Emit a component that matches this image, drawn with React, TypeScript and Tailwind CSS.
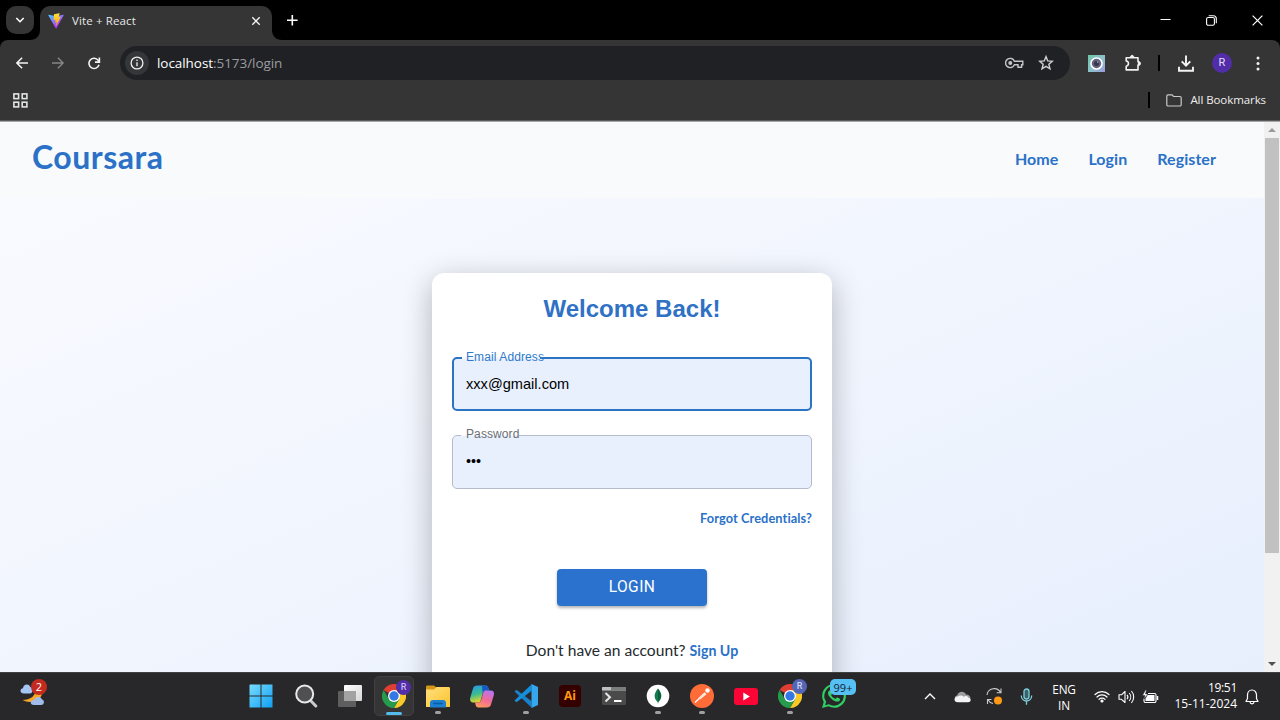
import React from "react";

type P = { children?: React.ReactNode };

const SYS = "font-['Open_Sans','Noto_Sans',sans-serif]";

/* ---------- Browser chrome ---------- */

function TabStrip() {
  return (
    <div className="flex h-10 items-start bg-black pl-1.5 pr-0">
      <div className="mt-1.5 flex h-7 w-7 items-center justify-center rounded-[10px] bg-[#353535]">
        <svg width="10" height="8" viewBox="0 0 10 8" fill="none" stroke="#fff" strokeWidth="1.6">
          <path d="M1.3 2 5 5.7 8.7 2" />
        </svg>
      </div>
      <div className="relative ml-1.5 mt-1.5 flex h-[34px] w-[232px] items-center rounded-t-[10px] bg-[#353535] pb-[5px] pl-2 pr-[11px]">
        <svg className="absolute -left-2.5 bottom-0" width="10" height="10" viewBox="0 0 10 10">
          <path d="M10 0v10H0C6 10 10 6 10 0Z" fill="#353535" />
        </svg>
        <svg className="absolute -right-2.5 bottom-0" width="10" height="10" viewBox="0 0 10 10">
          <path d="M0 0v10h10C4 10 0 6 0 0Z" fill="#353535" />
        </svg>
        <ViteLogo />
        <span className={`${SYS} ml-2 mt-px text-[11.5px] leading-4 tracking-[0.12px] text-[#e8e8e8]`}>Vite + React</span>
        <svg className="ml-auto" width="10" height="10" viewBox="0 0 10 10" stroke="#f2f2f2" strokeWidth="1.4">
          <path d="M1.3 1.3 8.7 8.7M8.7 1.3 1.3 8.7" />
        </svg>
      </div>
      <svg className="ml-[15px] mt-[15px]" width="11" height="11" viewBox="0 0 11 11" stroke="#fff" strokeWidth="1.6">
        <path d="M5.300 0v10.600M0 5.300h10.600" />
      </svg>
      <div className="ml-auto flex h-10 items-center text-white">
        <div className="flex w-[46px] justify-center">
          <svg width="11" height="10" viewBox="0 0 11 10" stroke="#fff" strokeWidth="1">
            <path d="M.5 4.5h10" />
          </svg>
        </div>
        <div className="flex w-[46px] justify-center">
          <svg width="11" height="11" viewBox="0 0 11 11" fill="none" stroke="#fff" strokeWidth="1.1">
            <rect x=".6" y="2.5" width="7.8" height="7.8" rx="1.6" />
            <path d="M2.7.7h4.6a3 3 0 0 1 3 3v4.5" />
          </svg>
        </div>
        <div className="flex w-[46px] justify-center">
          <svg width="11" height="11" viewBox="0 0 11 11" stroke="#fff" strokeWidth="1.2">
            <path d="m.6.6 9.8 9.8M10.4.6.6 10.4" />
          </svg>
        </div>
      </div>
    </div>
  );
}

function ViteLogo() {
  return (
    <svg width="16" height="16" viewBox="0 0 410 404">
      <defs>
        <linearGradient id="vp" x1="6" y1="33" x2="235" y2="344" gradientUnits="userSpaceOnUse">
          <stop stopColor="#41d1ff" />
          <stop offset="1" stopColor="#bd34fe" />
        </linearGradient>
        <linearGradient id="vy" x1="194" y1="9" x2="236" y2="293" gradientUnits="userSpaceOnUse">
          <stop stopColor="#ffea83" />
          <stop offset=".08" stopColor="#ffdd35" />
          <stop offset="1" stopColor="#ffa800" />
        </linearGradient>
      </defs>
      <path d="m399.641 59.525-183.998 329.02c-3.799 6.793-13.559 6.833-17.415.073L10.582 59.556C6.38 52.19 12.68 43.266 21.028 44.76l184.195 32.923c1.175.21 2.378.208 3.553-.006l180.343-32.87c8.32-1.517 14.649 7.337 10.522 14.719Z" fill="url(#vp)" />
      <path d="M292.965 1.574 156.801 28.255a5 5 0 0 0-4.03 4.611l-8.376 141.464c-.197 3.332 2.863 5.918 6.115 5.168l37.91-8.749c3.547-.818 6.752 2.306 6.023 5.873l-11.263 55.153c-.758 3.712 2.727 6.886 6.352 5.785l23.415-7.114c3.63-1.102 7.118 2.081 6.35 5.796l-17.899 86.633c-1.12 5.419 6.088 8.374 9.094 3.728l2.008-3.103 110.954-221.428c1.858-3.707-1.346-7.935-5.418-7.15l-39.022 7.532c-3.667.707-6.787-2.708-5.752-6.296l25.469-88.291c1.036-3.594-2.095-7.012-5.766-6.293Z" fill="url(#vy)" />
    </svg>
  );
}

function Toolbar() {
  return (
    <div className="bg-black">
      <div className="flex h-[46px] items-center rounded-tr-[8px] rounded-tl-[8px] bg-[#353535] pl-4 pr-5">
        <svg width="13" height="12" viewBox="0 0 13 12" fill="none" stroke="#f4f4f4" strokeWidth="1.5">
          <path d="M12 6H1M6.1.8.9 6l5.2 5.2" />
        </svg>
        <svg className="ml-[23px]" width="13" height="12" viewBox="0 0 13 12" fill="none" stroke="#858585" strokeWidth="1.4">
          <path d="M0 6h11M5.9.8 11.1 6l-5.2 5.2" />
        </svg>
        <svg className="ml-[23px]" width="13" height="13" viewBox="0 0 13 13" fill="none" stroke="#f4f4f4" strokeWidth="1.6">
          <path d="M11 7.8A5.100 5.100 0 1 1 10.200 3.400L11.500 4.800M11.400.6v4.500H7" />
        </svg>
        <div className="ml-[19px] flex h-[34px] w-[950px] items-center rounded-full bg-[#202124] pl-[5px] pr-4">
          <div className="flex h-6 w-6 items-center justify-center rounded-full bg-[#353639]">
            <svg width="14" height="14" viewBox="0 0 14 14" fill="none" stroke="#f1f1f1" strokeWidth="1.3">
              <circle cx="7" cy="7" r="5.9" />
              <path d="M7 6.2v4M7 3.6v1.5" />
            </svg>
          </div>
          <span className={`${SYS} ml-2 text-[13.5px] leading-5 tracking-[-0.06px] text-[#9b9da1]`}>
            <span className="text-white">localhost</span>:5173/login
          </span>
          <svg className="ml-auto" width="19" height="12" viewBox="0 0 19 12" fill="none" stroke="#c3c5c9" strokeWidth="1.4">
            <path d="M9.4 4.2A4.6 4.6 0 1 0 9.4 7.8H13v2.4h3.6V7.8h1.2V4.2Z" />
            <circle cx="5.3" cy="6" r="1.3" fill="#c3c5c9" />
          </svg>
          <svg className="ml-[14px]" width="16" height="16" viewBox="0 0 16 16" fill="none" stroke="#d0d1d4" strokeWidth="1.4">
            <path d="m8 1.6 1.75 4.3 4.65.35-3.55 3 1.1 4.55L8 11.35 4.05 13.8l1.1-4.55-3.55-3 4.65-.35Z" />
          </svg>
        </div>
        <svg className="ml-[18px]" width="17" height="17" viewBox="0 0 17 17">
          <defs>
            <linearGradient id="cam" x1="0" y1="0" x2="1" y2="1">
              <stop stopColor="#70c4a8" />
              <stop offset=".55" stopColor="#8cc2cb" />
              <stop offset="1" stopColor="#9e96df" />
            </linearGradient>
          </defs>
          <rect width="17" height="17" fill="url(#cam)" />
          <circle cx="8.5" cy="8.5" r="6.3" fill="#fff" />
          <circle cx="8.5" cy="8.5" r="4.7" fill="#62627f" />
          <circle cx="8.5" cy="8.5" r="2.5" fill="#393550" />
          <circle cx="9.7" cy="7.1" r=".8" fill="#a4a4bb" />
        </svg>
        <svg className="ml-[19px]" width="18" height="18" viewBox="0 0 18 18" fill="none" stroke="#f2f2f2" strokeWidth="1.6" strokeLinejoin="round">
          <path d="M2.2 3.7H14v4.1c2.6.1 2.6 3.2 0 3.3v4.8H2.2v-3.7c3-.4 3-4.8 0-5.2Z" />
          <path d="M6.4 3.3c.1-2.6 3.3-2.6 3.4 0ZM14.4 7.8c2.4.1 2.4 3.2 0 3.3Z" fill="#f2f2f2" strokeWidth="1" />
        </svg>
        <div className="ml-4 h-4 w-0.5 bg-black" />
        <svg className="ml-[18px]" width="16" height="17" viewBox="0 0 16 17" fill="none" stroke="#f4f4f4" strokeWidth="1.9">
          <path d="M8 .5v10M3.7 6.4 8 10.7l4.3-4.3M1 11.8v4h14v-4" />
        </svg>
        <div className="ml-[18px] flex h-5 w-5 items-center justify-center rounded-full bg-[#512da8] pt-px font-[Roboto,sans-serif] text-[11px] text-[#e5ddf7]">R</div>
        <svg className="ml-auto" width="4" height="15" viewBox="0 0 4 15" fill="#f2f2f2">
          <circle cx="2" cy="2" r="1.5" />
          <circle cx="2" cy="7.5" r="1.5" />
          <circle cx="2" cy="13" r="1.5" />
        </svg>
      </div>
      <div className="flex h-[35px] items-center border-b border-[#5a5a5c] bg-[#353535] pb-[6px] pl-[13px] pr-[14px]">
        <svg width="15" height="15" viewBox="0 0 15 15" fill="none" stroke="#e2e3e3" strokeWidth="1.6">
          <rect x=".9" y=".9" width="4.7" height="4.7" />
          <rect x="9.2" y=".9" width="4.7" height="4.7" />
          <rect x=".9" y="9.2" width="4.7" height="4.7" />
          <rect x="9.2" y="9.2" width="4.7" height="4.7" />
        </svg>
        <div className="ml-auto h-4 w-0.5 bg-black" />
        <svg className="ml-4" width="16" height="13" viewBox="0 0 16 13" fill="none" stroke="#c8c9ca" strokeWidth="1.2">
          <path d="M.8 10.7V2.1C.8 1.3 1.3.8 2 .8h4l1.6 1.7h6.3c.8 0 1.3.5 1.3 1.2v7c0 .8-.5 1.3-1.3 1.3H2C1.3 12 .8 11.500.8 10.7Z" />
        </svg>
        <span className={`${SYS} ml-2 text-[11.5px] leading-4 tracking-[-0.08px] text-[#eee]`}>All Bookmarks</span>
      </div>
    </div>
  );
}

/* ---------- Web page ---------- */

function SiteHeader() {
  return (
    <header className="flex h-[76px] shrink-0 items-center justify-between bg-[#f8fafb] pl-8 pr-12 text-[#2a71c7]">
      <h1 className="-mt-1.5 text-[32px] font-bold leading-10 tracking-[0.5px]">Coursara</h1>
      <nav className="-mt-0.5 flex gap-[30px] text-[16px] font-bold leading-6 tracking-[0.06px]">
        <a>Home</a>
        <a>Login</a>
        <a>Register</a>
      </nav>
    </header>
  );
}

function EmailField() {
  return (
    <div className="relative flex h-[54px] items-center rounded-[5px] border-2 border-[#2a74c1] bg-[#e8f0fe] px-3 font-['Liberation_Sans',sans-serif] text-[14.6px] text-black">
      <span className="absolute -top-0.5 left-2 h-0.5 w-[78px] bg-[#f3f7fd]" />
      <span className="absolute -top-[10px] left-3 text-[12px] leading-4 tracking-[0.1px] text-[#2f7acb]">Email Address</span>
      <span className="mt-px">xxx@gmail.com</span>
    </div>
  );
}

function PasswordField() {
  return (
    <div className="relative mt-6 flex h-[54px] items-center rounded-[5px] border border-[#b4bccc] bg-[#e8f0fe] px-[13px] font-['Liberation_Sans',sans-serif] text-[14.4px] text-black">
      <span className="absolute -top-px left-2 h-px w-[58px] bg-[#f3f7fd]" />
      <span className="absolute -top-[10px] left-[13px] text-[12px] leading-4 tracking-[0.1px] text-[#6b6e74]">Password</span>
      <span>•••</span>
    </div>
  );
}

function LoginCard() {
  return (
    <section className="mx-auto mt-[75px] flex h-[460px] w-[400px] shrink-0 flex-col rounded-t-[12px] bg-white px-5 shadow-[0_8px_30px_rgba(0,0,0,0.28)]">
      <h2 className="mt-5 text-center font-['Liberation_Sans',sans-serif] text-[24px] font-bold leading-8 text-[#2f71c5]">Welcome Back!</h2>
      <div className="mt-8 flex flex-col">
        <EmailField />
        <PasswordField />
      </div>
      <a className="mt-[19px] self-end text-[12.8px] font-bold leading-5 tracking-[0.08px] text-[#2a71c7]">Forgot Credentials?</a>
      <button className="mt-[41px] h-[37px] w-[150px] self-center rounded-[4px] bg-[#2a72ce] font-[Roboto,sans-serif] text-[15.6px] tracking-[0.4px] text-white shadow-[0_2px_3px_rgba(0,0,0,0.3)]">LOGIN</button>
      <p className="mt-8 text-center text-[15.6px] leading-6 text-[#252a2e]">
        Don&apos;t have an account? <a className="text-[14.2px] font-bold text-[#2a71c7]">Sign Up</a>
      </p>
    </section>
  );
}

function ScrollBar() {
  return (
    <div className="flex w-4 flex-col items-center bg-[#f1f1f1]">
      <svg className="mt-[6px]" width="8" height="4" viewBox="0 0 8 4"><path d="M0 4 4 0l4 4Z" fill="#9a9a9a" /></svg>
      <div className="mt-[6px] h-[415px] w-[14px] bg-[#c1c1c1]" />
      <svg className="mb-[6px] mt-auto" width="8" height="4" viewBox="0 0 8 4"><path d="m0 0 4 4 4-4Z" fill="#505050" /></svg>
    </div>
  );
}

/* ---------- Taskbar ---------- */

function TaskItem({ children, dot, active }: P & { dot?: boolean; active?: boolean }) {
  return (
    <div className={active ? "relative flex h-10 w-10 items-center justify-center rounded-[5px] border border-[#404041] bg-[#363536]" : "relative flex h-10 w-10 items-center justify-center"}>
      {children}
      {dot && <span className="absolute bottom-[2px] left-[17px] h-[3px] w-1.5 rounded-full bg-[#a0a0a2]" />}
      {active && <span className="absolute bottom-0 left-[11px] h-[3px] w-4 rounded-full bg-[#56b9ee]" />}
    </div>
  );
}

function Chrome({ badge }: { badge: "deep" | "soft" }) {
  return (
    <>
      <svg width="24" height="24" viewBox="0 0 24 24">
        <path d="M12 12 1.6 6A12 12 0 0 1 22.4 6L17.2 12Z" fill="#df3e32" />
        <path d="M12 6H22.400A12 12 0 0 1 12 24l5.200-9Z" fill="#f9c928" />
        <path d="M12 12l5.200 3L12 24A12 12 0 0 1 1.600 6l5.200 9Z" fill="#269b4c" />
        <circle cx="12" cy="12" r="6" fill="#fff" />
        <circle cx="12" cy="12" r="4.7" fill="#3478e5" />
      </svg>
      <span className={badge === "deep"
        ? "absolute right-[2px] top-[3px] flex h-[15px] w-[15px] items-center justify-center rounded-full bg-[#512da8] font-[Roboto,sans-serif] text-[9px] font-medium leading-none text-[#c8b9ea]"
        : "absolute right-[3px] top-[3px] flex h-[15px] w-[15px] items-center justify-center rounded-full bg-[#5465b5] font-[Roboto,sans-serif] text-[9px] font-medium leading-none text-[#cfd5f0]"}>R</span>
    </>
  );
}

function TaskIcons() {
  return (
    <div className="-mt-px ml-[193px] flex gap-1">
      <TaskItem>
        <svg width="24" height="24" viewBox="0 0 24 24">
          <defs><linearGradient id="win" x1="0" y1="0" x2="1" y2="1"><stop stopColor="#78dcfd" /><stop offset="1" stopColor="#109ff2" /></linearGradient></defs>
          <path d="M1 .5h10.500v11H.5V1ZM12.500.5H23.500v11h-11ZM.5 12.500h11v11H.5ZM12.500 12.500h11v11h-11Z" fill="url(#win)" />
        </svg>
      </TaskItem>
      <div className="ml-px flex gap-1">
        <TaskItem>
          <svg width="24" height="24" viewBox="0 0 24 24" fill="none">
            <path d="m16.500 16.500 5.300 5.500" stroke="#c9cbcd" strokeWidth="3" strokeLinecap="round" />
            <circle cx="10.700" cy="10" r="8.500" fill="#505052" stroke="#e8e9ea" strokeWidth="2" />
          </svg>
        </TaskItem>
        <TaskItem>
          <svg width="26" height="24" viewBox="0 0 26 24">
            <defs><linearGradient id="tv" x1="0" y1="0" x2="1" y2="1"><stop stopColor="#fff" /><stop offset="1" stopColor="#d6d6d6" /></linearGradient></defs>
            <rect x="7" y="1" width="18" height="16" rx="1" fill="url(#tv)" />
            <rect x="1" y="7" width="18" height="16" rx="1" fill="#5e5e5f" />
            <path d="M7 7h12v10H7Z" fill="#a2a2a2" />
          </svg>
        </TaskItem>
        <TaskItem active><Chrome badge="deep" /></TaskItem>
        <TaskItem dot>
          <svg width="24" height="24" viewBox="0 0 24 24">
            <defs><linearGradient id="fo" x1="0" y1="0" x2="1" y2="1"><stop stopColor="#ffe07b" /><stop offset="1" stopColor="#fbc32f" /></linearGradient></defs>
            <path d="M0 3c0-1 .5-1.500 1.500-1.500H8L11 4v5H0Z" fill="#d79715" />
            <path d="M0 5.500h8l2.500-2.500h12c1 0 1.500.5 1.500 1.500v18.500H0Z" fill="url(#fo)" />
            <path d="M4 23.500V19c0-2 1-3 3-3h10c2 0 3 1 3 3v4.500Z" fill="#1c7fcf" />
            <path d="M8 19.500h8" stroke="#075b9f" strokeWidth="1.500" strokeLinecap="round" />
          </svg>
        </TaskItem>
        <TaskItem>
          <svg width="24" height="23" viewBox="0 0 24 23">
            <defs>
              <linearGradient id="c1" x1="0" y1="0" x2=".3" y2="1"><stop stopColor="#2494ed" /><stop offset=".55" stopColor="#39bd91" /><stop offset="1" stopColor="#e8d429" /></linearGradient>
              <linearGradient id="c2" x1=".7" y1="0" x2=".3" y2="1"><stop stopColor="#b974f2" /><stop offset=".5" stopColor="#ef6a9a" /><stop offset="1" stopColor="#ff985f" /></linearGradient>
            </defs>
            <path d="M7.500.500h8c2 0 2.500 1 3 3l.5 2h-3c-2 0-2.800 1-3.300 3l-2 7c-.5 1.500-1.500 2-3 2H3c-2.500 0-3.500-2-2.700-5l2.700-9C3.700 1.200 5 .5 7.500.5Z" fill="url(#c1)" />
            <path d="M12 .500h3.500c2 0 2.500 1 3 3l.5 2h-3c-2 0-2.800 1-3.300 3Z" fill="#1757c8" />
            <path d="M16.500 22.500h-8c-2 0-2.500-1-3-3l-.5-2h3c2 0 2.800-1 3.300-3l2-7c.5-1.500 1.500-2 3-2H21c2.500 0 3.500 2 2.700 5l-2.700 9c-.7 2.300-2 3-4.500 3Z" fill="url(#c2)" />
          </svg>
        </TaskItem>
        <TaskItem dot>
          <svg width="24" height="24" viewBox="0 0 24 24">
            <path d="M17.500 0 24 3v18l-6.500 3Z" fill="#37a7ed" />
            <path d="m.5 7.500 2-1.800L18 17.500V24Z" fill="#1980c9" />
            <path d="m.5 16.500 2 1.800L18 6.500V0Z" fill="#168fda" />
          </svg>
        </TaskItem>
        <TaskItem>
          <div className="-mt-px flex h-[22px] w-[22px] items-center justify-center rounded-[4px] bg-[#350000] font-['Open_Sans',sans-serif] text-[12px] font-bold leading-none text-[#ff9a0e]">Ai</div>
        </TaskItem>
        <TaskItem>
          <svg width="24" height="18" viewBox="0 0 24 18" fill="none">
            <rect width="24" height="18" rx="1.500" fill="#4a4a4b" />
            <path d="M0 3.500V1c0-.6.4-1 1-1h22c.6 0 1 .4 1 1v2.500Z" fill="#bfc0c1" />
            <path d="M9 0h15v3.500H9Z" fill="#7b7c7d" />
            <path d="m3.500 6 4.500 4.200-4.500 4.300" stroke="#e6e6e6" strokeWidth="2" />
            <path d="M12 14h7.500" stroke="#fff" strokeWidth="2" />
          </svg>
        </TaskItem>
        <TaskItem dot>
          <svg width="24" height="24" viewBox="0 0 24 24">
            <circle cx="12" cy="12" r="11.300" fill="#fff" />
            <path d="M12 4.500c-4.300 5-4.500 9.500-.4 13.500L12 20Z" fill="#187b4b" />
            <path d="M12 4.500c4.300 5 4.500 9.500.4 13.500L12 20Z" fill="#07613f" />
          </svg>
        </TaskItem>
        <TaskItem dot>
          <svg width="24" height="24" viewBox="0 0 24 24" fill="none">
            <circle cx="12" cy="12" r="12" fill="#ff6c37" />
            <circle cx="17.500" cy="6.500" r="2.200" fill="#fff" />
            <path d="m8.300 14.200 6.200-6 2 2-6.500 5.300Z" fill="#fff3ed" />
            <path d="m5 18.500 4.300-4M10 14l3.500-3.500" stroke="#fff" strokeWidth="1.300" />
            <path d="m9.500 14.500 5-4.500" stroke="#ff9b79" strokeWidth=".5" />
          </svg>
        </TaskItem>
        <TaskItem>
          <svg width="24" height="17" viewBox="0 0 24 17">
            <rect width="24" height="17" rx="3" fill="#fb0536" />
            <path d="m9.300 4.600 6.500 3.900-6.500 3.900Z" fill="#fff" />
          </svg>
        </TaskItem>
        <TaskItem dot><Chrome badge="soft" /></TaskItem>
        <TaskItem>
          <svg width="24" height="24" viewBox="0 0 24 24" fill="#30ce63">
            <path d="M17.472 14.382c-.297-.149-1.758-.867-2.030-.967-.273-.099-.471-.148-.670.150-.197.297-.767.966-.940 1.164-.173.199-.347.223-.644.075-.297-.150-1.255-.463-2.390-1.475-.883-.788-1.480-1.761-1.653-2.059-.173-.297-.018-.458.130-.606.134-.133.298-.347.446-.520.149-.174.198-.298.298-.497.099-.198.050-.371-.025-.520-.075-.149-.669-1.612-.916-2.207-.242-.579-.487-.500-.669-.510-.173-.008-.371-.010-.570-.010-.198 0-.520.074-.792.372-.272.297-1.040 1.016-1.040 2.479 0 1.462 1.065 2.875 1.213 3.074.149.198 2.096 3.200 5.077 4.487.709.306 1.262.489 1.694.625.712.227 1.360.195 1.871.118.571-.085 1.758-.719 2.006-1.413.248-.694.248-1.289.173-1.413-.074-.124-.272-.198-.570-.347" />
            <path d="M12.050 0C5.495 0 .160 5.335.157 11.892c0 2.096.547 4.142 1.588 5.945L.057 24l6.305-1.654a11.900 11.900 0 0 0 5.683 1.448c6.555 0 11.890-5.335 11.893-11.893A11.900 11.900 0 0 0 12.050 0Zm0 2.100a9.800 9.800 0 1 1-.1 19.600 9.800 9.800 0 0 1-5.100-1.500l-3.700 1 1-3.600A9.800 9.800 0 0 1 12.050 2.100Z" />
          </svg>
          <span className={`${SYS} absolute left-4 top-[3px] flex h-4 w-[26px] items-center justify-center rounded-[5px] bg-[#56c0f5] text-[11px] leading-none text-[#132431]`}>99+</span>
        </TaskItem>
      </div>
    </div>
  );
}

function Weather() {
  return (
    <div className="relative -mt-1.5 ml-5 h-[30px] w-[28px]">
      <svg width="26" height="30" viewBox="0 0 26 30">
        <path d="M22 11c2 10-11 15-19.500 10 8 0 13-4 13.500-11Z" fill="#f6a72a" />
        <path d="M4 14.500C0 14.500-1 10 3 9.300 3 5 9 4 10.300 8c3 .5 3 6.500-.3 6.500Z" fill="#a5c5f5" />
        <path d="M14 26c-4.500 0-4-5 0-5 1-4 7-4 7.800-.7 3 .7 3 5.700-.8 5.700Z" fill="#a1bceb" />
      </svg>
      <span className={`${SYS} absolute left-[11px] top-0 flex h-4 w-4 items-center justify-center rounded-full bg-[#c42b1f] text-[11px] leading-none text-white`}>2</span>
    </div>
  );
}

function Tray() {
  return (
    <div className={`${SYS} ml-auto flex items-center pr-[21px] text-[12px] leading-4 text-white`}>
      <svg width="12" height="7" viewBox="0 0 12 7" fill="none" stroke="#fff" strokeWidth="1.400"><path d="M1 6 6 1l5 5" /></svg>
      <svg className="ml-[18px]" width="17" height="12" viewBox="0 0 17 12">
        <path d="M3 9C0 8.500.3 4.800 3.200 4.500 4-.2 10.500-.5 12 3.500c3 0 4.500 2 4.500 4Z" fill="#9d9d9e" />
        <path d="M4 11.300c-4.800 0-4.500-5.600-.2-5.800 2-1.700 4.200-1.200 6 .3 1.800-1.500 4-.8 4.500.9 3.300.3 3.200 4.600-.3 4.600Z" fill="#f4f4f4" />
      </svg>
      <svg className="ml-[15px]" width="17" height="17" viewBox="0 0 17 17" fill="none" stroke="#c9c9ca" strokeWidth="1.100">
        <path d="M1 7a7.200 7.200 0 0 1 13.500-2.500M15 .5v4.300h-4.300M7 15.500a7 7 0 0 1-5-3.700M1.500 16v-4.500h4" />
        <circle cx="12" cy="12.500" r="4" fill="#ff9813" stroke="none" />
      </svg>
      <svg className="ml-[17px]" width="13" height="17" viewBox="0 0 13 17" fill="none" stroke="#7fcddc" strokeWidth="1.300">
        <rect x="4" y="1" width="5" height="10" rx="2.500" fill="#39636b" />
        <path d="M1.300 7.500c0 7.300 10.400 7.300 10.400 0M6.500 13v3.700" />
      </svg>
      <div className="ml-[17px] flex w-[28px] flex-col items-center whitespace-nowrap text-[11.8px] tracking-[-0.2px]"><div>ENG</div><div>IN</div></div>
      <svg className="ml-4" width="16" height="13" viewBox="0 0 16 13" fill="none" stroke="#fff" strokeWidth="1.200" strokeLinecap="round">
        <path d="M1 4.500a10 10 0 0 1 14 0M3 7a7 7 0 0 1 10 0M5 9.300a4.200 4.200 0 0 1 6 0" />
        <circle cx="8" cy="11" r="1" fill="#fff" />
      </svg>
      <svg className="ml-2" width="17" height="14" viewBox="0 0 17 14" fill="none" stroke="#fff" strokeWidth="1.100" strokeLinejoin="round">
        <path d="M1 4.800h2.500L7 1.500v11L3.500 9.300H1ZM9 4.800a3.400 3.400 0 0 1 0 4.400M11.200 3a6 6 0 0 1 0 8M13.400 1a9 9 0 0 1 0 12" />
      </svg>
      <svg className="ml-[7px]" width="17" height="14" viewBox="0 0 17 14" fill="none" stroke="#fff" strokeWidth="1.100">
        <path d="M6 3.500h6.500A1.500 1.500 0 0 1 14 5v6a1.500 1.500 0 0 1-1.500 1.500h-9A1.500 1.500 0 0 1 2 11V8.500" />
        <path d="M5.500 5h7v6h-9V8.500Z" fill="#fff" stroke="none" />
        <path d="M15.500 6v4" strokeWidth="1.500" />
        <path d="M3.500 0 .5 5.500H3L2 9l4-5H3.500l1-4Z" fill="#fff" stroke="#29292a" strokeWidth=".5" />
      </svg>
      <div className="ml-3 -mt-0.5 flex w-[66px] flex-col items-end whitespace-nowrap"><div className="tracking-[-0.3px]">19:51</div><div>15-11-2024</div></div>
      <svg className="ml-2" width="14" height="16" viewBox="0 0 14 16" fill="none" stroke="#fff" strokeWidth="1.200" strokeLinejoin="round">
        <path d="M7 1C4 1 2.500 3.500 2.500 6v3.500L1 12.500h12L11.500 9.500V6C11.500 3.500 10 1 7 1ZM5 13c.3 2.500 3.700 2.500 4 0" />
      </svg>
    </div>
  );
}

export default function App() {
  return (
    <div className="flex h-[720px] w-[1280px] flex-col overflow-hidden">
      <TabStrip />
      <Toolbar />
      <div className="flex h-[551px] border-t border-[#a5a5a6]">
        <main className="flex flex-1 flex-col overflow-hidden bg-[linear-gradient(157deg,#fafbff_0%,#f2f6fe_45%,#e7effd_100%)] font-[Lato,sans-serif]">
          <SiteHeader />
          <LoginCard />
        </main>
        <ScrollBar />
      </div>
      <footer className="flex h-12 shrink-0 items-center border-t border-[#414142] bg-[#28282a]">
        <Weather />
        <TaskIcons />
        <Tray />
      </footer>
    </div>
  );
}
